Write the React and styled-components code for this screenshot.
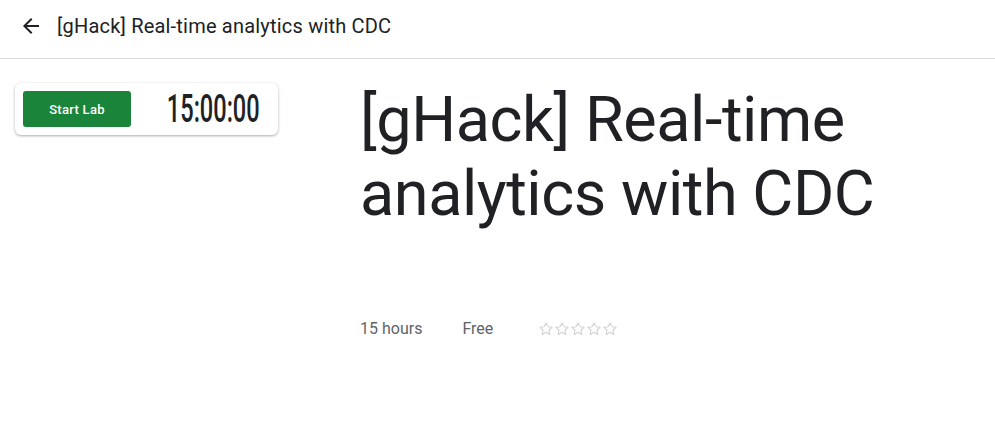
import styled, { createGlobalStyle } from 'styled-components';

const GlobalStyle = createGlobalStyle`
  body {
    margin: 0;
    background: #fff;
    font-family: Roboto, "Open Sans", sans-serif;
    color: #202124;
  }
`;

function ArrowBack() {
  return (
    <svg width="24" height="24" viewBox="0 0 24 24" fill="#202124">
      <path d="M20 11H7.83l5.59-5.59L12 4l-8 8 8 8 1.41-1.41L7.83 13H20v-2z" />
    </svg>
  );
}

function Star() {
  return (
    <svg width="16" height="16" viewBox="0 0 24 24" fill="none" stroke="#d2d2d2" strokeWidth="1.6" strokeLinejoin="round">
      <path d="M12 2.8l2.75 5.9 6.45.75-4.8 4.4 1.3 6.35L12 17l-5.7 3.2 1.3-6.35-4.8-4.4 6.45-.75z" />
    </svg>
  );
}

export default function App() {
  return (
    <Page>
      <GlobalStyle />
      <Header>
        <BackButton aria-label="Back">
          <ArrowBack />
        </BackButton>
        <HeaderTitle>[gHack] Real-time analytics with CDC</HeaderTitle>
      </Header>
      <Main>
        <Sidebar>
          <LabCard>
            <StartButton>Start Lab</StartButton>
            <TimerBox>
              <Timer>15:00:00</Timer>
            </TimerBox>
          </LabCard>
        </Sidebar>
        <Content>
          <Title>[gHack] Real-time analytics with CDC</Title>
          <Meta>
            <MetaItem>15 hours</MetaItem>
            <MetaItem>Free</MetaItem>
            <Stars>
              {[0, 1, 2, 3, 4].map((i) => (
                <Star key={i} />
              ))}
            </Stars>
          </Meta>
        </Content>
      </Main>
    </Page>
  );
}

const Page = styled.div`
  width: 995px;
  height: 428px;
  overflow: hidden;
`;

const Header = styled.header`
  display: flex;
  align-items: center;
  height: 59px;
  padding: 0 0 6px 19px;
  border-bottom: 1px solid #dadce0;
  box-sizing: border-box;
`;

const BackButton = styled.button`
  display: flex;
  align-items: center;
  justify-content: center;
  width: 24px;
  height: 24px;
  padding: 0;
  border: none;
  background: none;
  margin-right: 14px;
  cursor: pointer;
`;

const HeaderTitle = styled.h1`
  margin: 0;
  font-size: 20px;
  font-weight: 400;
  color: #202124;
  letter-spacing: 0.2px;
`;

const Main = styled.main`
  display: flex;
  padding: 24px 0 0 15px;
`;

const Sidebar = styled.aside`
  width: 263px;
  margin-right: 82px;
  flex-shrink: 0;
`;

const LabCard = styled.div`
  display: flex;
  align-items: center;
  justify-content: space-between;
  height: 52px;
  padding: 0 18px 0 8px;
  box-sizing: border-box;
  border-radius: 6px;
  background: #fff;
  box-shadow: 0 1px 3px rgba(60, 64, 67, 0.3), 0 1px 2px rgba(60, 64, 67, 0.15);
`;

const StartButton = styled.button`
  width: 108px;
  height: 36px;
  border: none;
  border-radius: 3px;
  background: #1a843a;
  color: #fff;
  font-family: Roboto, sans-serif;
  font-size: 13px;
  font-weight: 500;
  letter-spacing: 0.3px;
  cursor: pointer;
`;

const TimerBox = styled.div`
  display: flex;
  justify-content: flex-end;
  width: 95px;
`;

const Timer = styled.div`
  font-family: Roboto, sans-serif;
  font-size: 38px;
  font-weight: 500;
  line-height: 40px;
  color: #202124;
  white-space: nowrap;
  transform: scaleX(0.62);
  transform-origin: right center;
`;

const Content = styled.section`
  display: flex;
  flex-direction: column;
`;

const Title = styled.h2`
  margin: 0;
  width: 560px;
  font-size: 63px;
  font-weight: 400;
  line-height: 74px;
  color: #202124;
  letter-spacing: -0.45px;
`;

const Meta = styled.div`
  display: flex;
  align-items: center;
  margin-top: 88px;
  gap: 40px;
`;

const MetaItem = styled.span`
  font-size: 16px;
  color: #5f6368;
`;

const Stars = styled.div`
  display: flex;
  margin-left: 5px;
`;
